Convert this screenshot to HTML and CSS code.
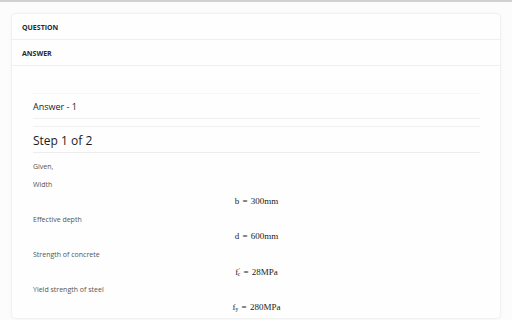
FILE: index.html
```html
<!DOCTYPE html>
<html>
<head>
<meta charset="utf-8">
<link rel="stylesheet" href="styles.css">
</head>
<body>
<div class="topline"></div>
<div class="card">
  <div class="tab">QUESTION</div>
  <div class="tab">ANSWER</div>
  <div class="answer">
    <div class="answer-head">Answer - 1</div>
    <div class="step-head">Step 1 of 2</div>
    <div class="content">
      <p class="label">Given,</p>
      <p class="label">Width</p>
      <p class="eq">b = 300mm</p>
      <p class="label">Effective depth</p>
      <p class="eq">d = 600mm</p>
      <p class="label">Strength of concrete</p>
      <p class="eq">f<sup class="sp">′</sup><sub class="sb shift">c</sub> = 28MPa</p>
      <p class="label">Yield strength of steel</p>
      <p class="eq">f<sub class="sb">y</sub> = 280MPa</p>
    </div>
  </div>
</div>
</body>
</html>
```
FILE: styles.css
```css
html, body {
  margin: 0;
  padding: 0;
  height: 320px;
  background: #fbfcfb;
  font-family: "Open Sans", "Noto Sans", sans-serif;
  overflow: hidden;
}
.topline {
  height: 2px;
  background: #cfd1cf;
}
.card {
  margin: 12px 12px 0 12px;
  width: 488px;
  height: 304px;
  overflow: hidden;
  background: #fdfefd;
  border-radius: 4px;
  box-shadow: 0 0 3px rgba(0,0,0,0.12);
}
.tab {
  height: 26px;
  line-height: 27px;
  padding-left: 10px;
  font-size: 7px;
  font-weight: 700;
  color: #1e2a38;
  border-bottom: 1px solid #eef0ee;
  box-sizing: border-box;
}
.answer {
  padding: 27px 20px 0 21px;
}
.answer-head {
  height: 26px;
  line-height: 26px;
  font-size: 9px;
  color: #1c1c1c;
  border-top: 1px dotted #f1eeee;
  border-bottom: 1px solid #efefef;
  box-sizing: border-box;
}
.step-head {
  margin-top: 7px;
  height: 27px;
  line-height: 28px;
  font-size: 12px;
  color: #1c1c1c;
  border-top: 1px solid #f3efef;
  border-bottom: 1px solid #ededed;
  box-sizing: border-box;
}
.content {
  padding-top: 5px;
}
.content p {
  margin: 0;
  height: 17.6px;
  line-height: 17.6px;
}
.label {
  font-size: 7px;
  color: #555;
}
.eq {
  text-align: center;
  font-family: "Liberation Serif", "DejaVu Serif", serif;
  font-size: 9px;
  word-spacing: 1px;
  color: #222;
}
.sp, .sb {
  font-size: 5.5px;
  line-height: 0;
  position: relative;
}
.sp {
  vertical-align: 3px;
  margin-left: 0.5px;
}
.sb {
  vertical-align: -1.5px;
}
.sb.shift {
  margin-left: -2px;
}
```
